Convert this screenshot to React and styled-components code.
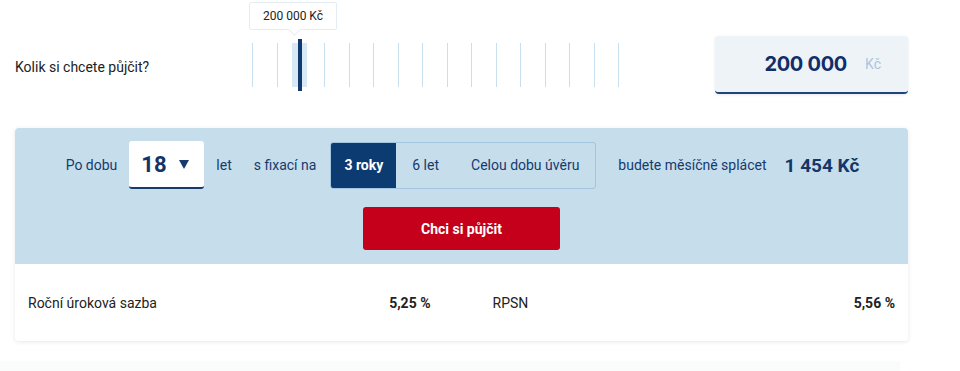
import React from "react";
import styled, { createGlobalStyle } from "styled-components";

const GlobalStyle = createGlobalStyle`
  body {
    margin: 0;
    background: #ffffff;
    font-family: Roboto, "Liberation Sans", sans-serif;
  }
`;

const navy = "#163a6c";

const Page = styled.div`
  width: 893px;
  margin-left: 15px;
`;

const TopRow = styled.div`
  display: flex;
  align-items: center;
  padding-top: 36px;
  height: 58px;
`;

const Question = styled.div`
  width: 237px;
  font-size: 14px;
  color: #222;
  padding-top: 3px;
`;

const Ticks = styled.div`
  display: flex;
  align-items: center;
  gap: 23.5px;
  height: 58px;
`;

const Tick = styled.div`
  width: 1px;
  height: 44px;
  background: #c8dfef;
`;

const ActiveTick = styled.div`
  position: relative;
  width: 4px;
  height: 52px;
  margin: 0 -1.5px 0 -3px;
  background: #0e3a70;
  &::before {
    content: "";
    position: absolute;
    left: -6px;
    top: 4px;
    width: 15px;
    height: 44px;
    background: #d8e8f4;
    z-index: -1;
  }
`;

const Tooltip = styled.div`
  position: absolute;
  left: -49px;
  bottom: calc(100% + 9px);
  width: 86px;
  height: 26px;
  background: #fff;
  border: 1px solid #e3edf4;
  border-radius: 2px;
  display: flex;
  align-items: center;
  justify-content: center;
  font-size: 12px;
  color: #222;
  white-space: nowrap;
  &::after {
    content: "";
    position: absolute;
    left: 40px;
    bottom: -5px;
    width: 8px;
    height: 8px;
    background: #fff;
    border-right: 1px solid #e3edf4;
    border-bottom: 1px solid #e3edf4;
    transform: rotate(45deg);
  }
`;

const AmountBox = styled.div`
  margin-left: auto;
  width: 193px;
  height: 56px;
  box-sizing: content-box;
  display: flex;
  align-items: center;
  justify-content: flex-end;
  gap: 18px;
  padding-right: 0;
  background: #eef3f8;
  border-radius: 4px;
  border-bottom: 2px solid #1f4579;
  box-shadow: 0 1px 3px rgba(40, 70, 110, 0.12);
`;

const AmountValue = styled.span`
  font-family: Inter, "Liberation Sans", sans-serif;
  font-weight: 700;
  font-size: 20px;
  letter-spacing: -0.3px;
  color: #102e68;
`;

const AmountUnit = styled.span`
  font-size: 14px;
  color: #a9c6de;
  margin-right: 27px;
`;

const Card = styled.div`
  margin-top: 34px;
  border-radius: 4px;
  overflow: hidden;
  background: #fff;
  box-shadow: 0 1px 4px rgba(60, 90, 110, 0.14);
`;

const BluePart = styled.div`
  background: #c6deec;
  padding: 13px 0 14px;
  display: flex;
  flex-direction: column;
  align-items: center;
  gap: 18px;
`;

const Row = styled.div`
  display: flex;
  align-items: center;
  gap: 22px;
  padding-left: 2px;
`;

const Group = styled.div`
  display: flex;
  align-items: center;
  gap: ${(p) => p.gap || 14}px;
`;

const Label = styled.span`
  font-size: 14px;
  color: ${navy};
`;

const Select = styled.div`
  width: 75px;
  height: 46px;
  box-sizing: border-box;
  display: flex;
  align-items: center;
  justify-content: space-between;
  padding: 0 15px 0 12px;
  background: #fff;
  border-radius: 3px;
  border-bottom: 2px solid #163a6c;
  box-sizing: content-box;
  padding-top: 0;
  width: 48px;
`;

const SelectValue = styled.span`
  font-size: 22px;
  font-weight: 700;
  color: #123468;
`;

const Caret = styled.span`
  width: 0;
  height: 0;
  border-left: 5px solid transparent;
  border-right: 5px solid transparent;
  border-top: 9px solid #163a6c;
`;

const Segments = styled.div`
  display: flex;
  height: 45px;
  border: 1px solid #a3c5e0;
  border-radius: 3px;
  overflow: hidden;
`;

const Segment = styled.div`
  display: flex;
  align-items: center;
  padding: 0 ${(p) => (p.active ? 13 : 16)}px;
  font-size: 14px;
  font-weight: ${(p) => (p.active ? 700 : 400)};
  color: ${(p) => (p.active ? "#fff" : navy)};
  background: ${(p) => (p.active ? "#0c3b72" : "transparent")};
`;

const Payment = styled.span`
  font-size: 19px;
  font-weight: 700;
  color: #153667;
`;

const Button = styled.button`
  width: 197px;
  height: 43px;
  border: none;
  border-radius: 3px;
  background: #c4001a;
  color: #fff;
  font-family: Roboto, "Liberation Sans", sans-serif;
  font-size: 14px;
  font-weight: 700;
`;

const InfoRow = styled.div`
  height: 77px;
  display: grid;
  grid-template-columns: 1fr 1fr;
  column-gap: 62px;
  padding: 0 13px;
  align-items: center;
`;

const InfoItem = styled.div`
  display: flex;
  justify-content: space-between;
  font-size: 14px;
  color: #222;
`;

const InfoValue = styled.span`
  font-weight: 700;
`;

const NextBand = styled.div`
  margin-top: 20px;
  margin-left: -15px;
  width: 900px;
  height: 10px;
  background: #fafbfb;
`;

const TICKS = 16;
const ACTIVE = 2;

export default function App() {
  return (
    <>
      <GlobalStyle />
      <Page>
        <TopRow>
          <Question>Kolik si chcete půjčit?</Question>
          <Ticks>
            {Array.from({ length: TICKS }, (_, i) =>
              i === ACTIVE ? (
                <ActiveTick key={i}>
                  <Tooltip>200 000 Kč</Tooltip>
                </ActiveTick>
              ) : (
                <Tick key={i} />
              )
            )}
          </Ticks>
          <AmountBox>
            <AmountValue>200 000</AmountValue>
            <AmountUnit>Kč</AmountUnit>
          </AmountBox>
        </TopRow>
        <Card>
          <BluePart>
            <Row>
              <Group gap={12}>
                <Label>Po dobu</Label>
                <Select>
                  <SelectValue>18</SelectValue>
                  <Caret />
                </Select>
                <Label>let</Label>
              </Group>
              <Group>
                <Label>s fixací na</Label>
                <Segments>
                  <Segment active>3 roky</Segment>
                  <Segment>6 let</Segment>
                  <Segment>Celou dobu úvěru</Segment>
                </Segments>
              </Group>
              <Group gap={18}>
                <Label>budete měsíčně splácet</Label>
                <Payment>1 454 Kč</Payment>
              </Group>
            </Row>
            <Button>Chci si půjčit</Button>
          </BluePart>
          <InfoRow>
            <InfoItem>
              <span>Roční úroková sazba</span>
              <InfoValue>5,25 %</InfoValue>
            </InfoItem>
            <InfoItem>
              <span>RPSN</span>
              <InfoValue>5,56 %</InfoValue>
            </InfoItem>
          </InfoRow>
        </Card>
        <NextBand />
      </Page>
    </>
  );
}
